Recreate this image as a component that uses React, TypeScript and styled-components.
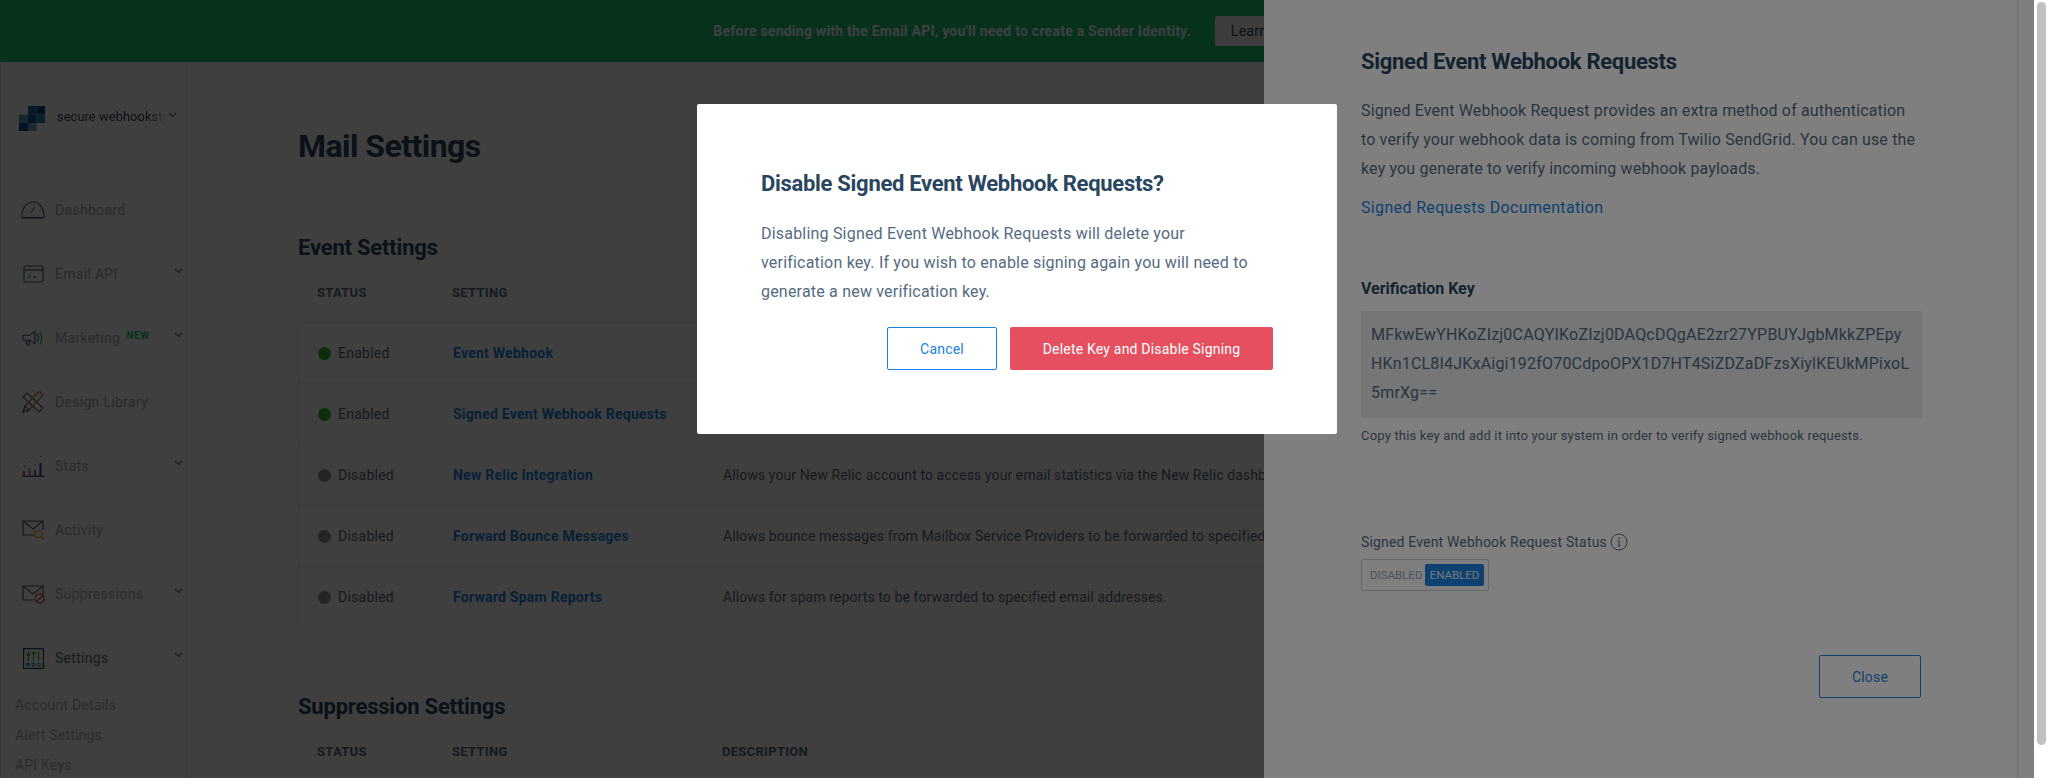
import React from 'react';
import styled, { createGlobalStyle } from 'styled-components';

const Global = createGlobalStyle`
  html, body { margin: 0; padding: 0; height: 100%; overflow: hidden; background: #fff; }
  body { font-family: Roboto, "Liberation Sans", sans-serif; color: #546b81; }
  #root { height: 100%; }
`;

const Shell = styled.div`
  display: flex;
  width: 2048px;
  height: 778px;
  overflow: hidden;
`;
const Viewport = styled.div`
  position: relative;
  width: 2034px;
  height: 778px;
  overflow: hidden;
  display: flex;
  flex-direction: column;
  background: #fff;
`;
const ScrollTrack = styled.div`
  width: 14px;
  background: #fff;
  display: flex;
  justify-content: center;
  padding-top: 2px;
`;
const ScrollThumb = styled.div`
  width: 9px;
  height: 743px;
  border-radius: 5px;
  background: #c1c1c1;
`;
const Banner = styled.div`
  height: 62px;
  flex: none;
  background: #18c96e;
  display: flex;
  align-items: center;
  justify-content: center;
  gap: 24px;
`;
const BannerText = styled.span`
  font-size: 14px;
  font-weight: 700;
  color: #fff;
  letter-spacing: 0.24px;
`;
const BannerButton = styled.span`
  height: 30px;
  width: 106px;
  display: flex;
  align-items: center;
  justify-content: center;
  background: #f4f4f4;
  border-radius: 2px;
  font-size: 14px;
  color: #294661;
  letter-spacing: 0.3px;
`;
const Body = styled.div`
  flex: 1;
  display: flex;
  min-height: 0;
`;
const Sidebar = styled.aside`
  width: 192px;
  flex: none;
  border-left: 1px solid #e6e6e6;
  border-right: 1px solid #ececec;
  box-sizing: border-box;
  overflow: hidden;
`;
const Account = styled.div`
  display: flex;
  align-items: center;
  height: 26px;
  margin: 43px 0 0 18px;
`;
const AccountName = styled.span`
  margin: -3px 0 0 12px;
  width: 111px;
  overflow: hidden;
  white-space: nowrap;
  font-size: 13px;
  color: #294661;
  -webkit-mask-image: linear-gradient(to right, #000 84%, transparent 100%);
  mask-image: linear-gradient(to right, #000 84%, transparent 100%);
`;
const AccountChevron = styled.span`
  display: flex;
  margin: -6px 0 0 0;
`;
const Nav = styled.nav`
  margin-top: 47px;
`;
const NavItem = styled.div`
  height: 64px;
  display: flex;
  align-items: center;
  padding-left: 19px;
  position: relative;
`;
const NavIcon = styled.span`
  width: 26px;
  height: 24px;
  flex: none;
  display: flex;
  align-items: center;
  justify-content: center;
  margin-right: 9px;
`;
const NavLabel = styled.span<{ $active?: boolean }>`
  font-size: 14px;
  letter-spacing: 0.3px;
  color: ${(p) => (p.$active ? '#546b81' : '#9eacba')};
`;
const NewTag = styled.span`
  font-size: 10px;
  font-weight: 700;
  letter-spacing: 0.6px;
  color: #18c96e;
  margin: -6px 0 0 6px;
`;
const NavChevron = styled.span`
  position: absolute;
  left: 173px;
  top: 26px;
  display: flex;
`;
const SubList = styled.div``;
const SubItem = styled.div`
  height: 30px;
  display: flex;
  align-items: center;
  padding-left: 14px;
  font-size: 14px;
  letter-spacing: 0.2px;
  color: #a3b0bc;
`;
const Main = styled.main`
  flex: 1;
  min-width: 0;
  padding: 64px 60px 0 106px;
  overflow: hidden;
`;
const PageTitle = styled.h1`
  margin: 0;
  font-size: 32px;
  line-height: 40px;
  font-weight: 700;
  letter-spacing: -0.55px;
  color: #294661;
`;
const SectionTitle = styled.h2<{ $top: number }>`
  margin: ${(p) => p.$top}px 0 0;
  font-size: 22px;
  line-height: 28px;
  font-weight: 700;
  letter-spacing: -0.2px;
  color: #294661;
`;
const HeadRow = styled.div`
  display: grid;
  grid-template-columns: 135px 270px 1fr;
  padding-left: 19px;
  height: 30px;
  margin: 15px 0;
  align-items: center;
  font-size: 13px;
  font-weight: 700;
  letter-spacing: 0.3px;
  color: #546b81;
`;
const Table = styled.div`
  border: 1px solid #e9ecef;
  border-right: none;
`;
const Row = styled.div`
  display: grid;
  grid-template-columns: 135px 270px 1fr;
  padding-left: 19px;
  height: 60px;
  align-items: center;
  font-size: 14px;
  white-space: nowrap;
  & + & { border-top: 1px solid #e9ecef; }
`;
const Status = styled.span`
  display: flex;
  align-items: center;
  gap: 7px;
  letter-spacing: 0.25px;
`;
const Dot = styled.span<{ $on: boolean }>`
  width: 13px;
  height: 13px;
  border-radius: 50%;
  background: ${(p) => (p.$on ? '#30b030' : '#8f9499')};
`;
const SettingLink = styled.span`
  font-weight: 700;
  color: #1a82e2;
  letter-spacing: 0.25px;
`;
const Description = styled.span`
  letter-spacing: 0.1px;
`;
const Overlay = styled.div`
  position: absolute;
  inset: 0;
  background: rgba(0, 0, 0, 0.5);
`;
const ModalLayer = styled(Overlay)`
  display: flex;
  justify-content: center;
  align-items: flex-start;
  padding-top: 104px;
  box-sizing: border-box;
`;
const Drawer = styled.section`
  position: absolute;
  top: 0;
  bottom: 0;
  left: 1264px;
  right: 0;
  background: #fff;
  box-sizing: border-box;
  padding: 47px 0 0 97px;
  &::after {
    content: '';
    position: absolute;
    top: 0;
    bottom: 0;
    right: 16px;
    width: 1px;
    background: #dfdfdf;
  }
`;
const DrawerTitle = styled.h3`
  margin: 0;
  font-size: 22px;
  line-height: 30px;
  font-weight: 700;
  letter-spacing: -0.3px;
  color: #294661;
`;
const DrawerCopy = styled.p`
  margin: 19px 0 0;
  width: 570px;
  font-size: 16px;
  line-height: 29px;
  letter-spacing: 0.15px;
  color: #546b81;
`;
const DocLink = styled.div`
  margin-top: 10px;
  font-size: 16px;
  line-height: 29px;
  letter-spacing: 0.35px;
  color: #1a82e2;
`;
const KeyLabel = styled.div`
  margin-top: 56px;
  font-size: 16px;
  line-height: 22px;
  font-weight: 700;
  color: #294661;
`;
const KeyBox = styled.div`
  margin-top: 11px;
  width: 561px;
  height: 107px;
  box-sizing: border-box;
  padding: 9px 10px;
  background: #e9ecef;
  font-size: 16px;
  line-height: 29px;
  color: #546b81;
  letter-spacing: 0.2px;
  white-space: nowrap;
`;
const KeyHint = styled.div`
  margin-top: 9px;
  font-size: 13px;
  line-height: 18px;
  letter-spacing: 0.18px;
  color: #546b81;
`;
const StatusLine = styled.div`
  margin-top: 87px;
  display: flex;
  align-items: center;
  gap: 3px;
  font-size: 14px;
  line-height: 20px;
  letter-spacing: 0.17px;
  color: #546b81;
`;
const Toggle = styled.div`
  margin-top: 7px;
  width: 128px;
  height: 32px;
  box-sizing: border-box;
  border: 1px solid #c8ced4;
  border-radius: 2px;
  display: flex;
  align-items: center;
  padding-left: 8px;
  font-size: 11.5px;
`;
const ToggleOff = styled.span`
  width: 55px;
  color: #9aa6b2;
`;
const ToggleOn = styled.span`
  width: 59px;
  height: 22px;
  border-radius: 2px;
  background: #1a82e2;
  color: #e8f1fb;
  display: flex;
  align-items: center;
  justify-content: center;
`;
const DrawerFooter = styled.div`
  margin-top: 64px;
  width: 560px;
  display: flex;
  justify-content: flex-end;
`;
const Button = styled.button<{ $kind: 'outline' | 'danger'; $w: number }>`
  width: ${(p) => p.$w}px;
  height: 43px;
  box-sizing: border-box;
  padding: 0;
  border-radius: 2px;
  font-family: Roboto, "Liberation Sans", sans-serif;
  font-size: 14px;
  letter-spacing: 0.2px;
  border: 1px solid ${(p) => (p.$kind === 'danger' ? '#e54f5f' : '#1a82e2')};
  background: ${(p) => (p.$kind === 'danger' ? '#e54f5f' : '#fff')};
  color: ${(p) => (p.$kind === 'danger' ? '#fff' : '#1a82e2')};
`;
const Modal = styled.div`
  width: 640px;
  height: 330px;
  box-sizing: border-box;
  padding: 65px 64px 0;
  background: #fff;
  border-radius: 2px;
`;
const ModalTitle = styled.h3`
  margin: 0;
  font-size: 22px;
  line-height: 30px;
  font-weight: 700;
  letter-spacing: -0.3px;
  color: #294661;
`;
const ModalCopy = styled.p`
  margin: 20px 0 0;
  font-size: 16px;
  line-height: 29px;
  letter-spacing: 0.2px;
  color: #546b81;
`;
const ModalActions = styled.div`
  margin-top: 21px;
  display: flex;
  justify-content: flex-end;
  gap: 13px;
`;

const Chevron = () => (
  <svg width="9" height="6" viewBox="0 0 9 6" fill="none" stroke="#546b81" strokeWidth="1.1">
    <path d="M1 1l3.5 3.5L8 1" />
  </svg>
);

const Logo = () => (
  <svg width="26" height="25" viewBox="0 0 26 25">
    <rect x="9" y="0" width="8.5" height="8.5" fill="#0f6aa8" />
    <rect x="17.5" y="0" width="8.5" height="8.5" fill="#0a4a86" />
    <rect x="9" y="8.5" width="8.5" height="8.5" fill="#0a4f8f" />
    <rect x="17.5" y="8.5" width="8.5" height="8.5" fill="#1d88b0" />
    <rect x="0" y="8.5" width="9" height="8.5" fill="#5fa0b5" />
    <rect x="0" y="17" width="9" height="8" fill="#0a4a9a" />
    <rect x="9" y="17" width="8.5" height="8" fill="#6fa6b8" />
  </svg>
);

const S = '#4e6478';
const icons: Record<string, React.ReactNode> = {
  dashboard: (
    <svg width="24" height="18" viewBox="0 0 24 18" fill="none" stroke={S} strokeWidth="1.2">
      <path d="M1 16.5C.6 8 5 1 12 1s11.4 7 11 15.5z" />
      <path d="M1 16.8h22" strokeWidth="1.6" />
      <path d="M9.5 12.5L14 6" stroke="#3b82e2" />
      <path d="M13 2.5v2" stroke="#f08a3c" />
    </svg>
  ),
  email: (
    <svg width="21" height="18" viewBox="0 0 21 18" fill="none" stroke={S} strokeWidth="1.2">
      <rect x="1" y="1" width="19" height="16" rx="1.5" />
      <path d="M1 5h19" />
      <path d="M5 9.5l2.5 2L5 13.5" stroke="#18c96e" />
      <path d="M10 12h3" />
    </svg>
  ),
  marketing: (
    <svg width="22" height="18" viewBox="0 0 22 18" fill="none" stroke={S} strokeWidth="1.2">
      <path d="M1 6.5h6L13 2.5v12L7 11H1z" />
      <path d="M3.5 11l1.5 5h2.5L6.5 11" />
      <path d="M15.5 4.5c1.2 2.5 1.2 5.5 0 8" stroke="#3b82e2" />
      <path d="M18 2c2 4 2 9 0 13.5" stroke="#18c96e" />
    </svg>
  ),
  design: (
    <svg width="22" height="22" viewBox="0 0 22 22" fill="none" stroke={S} strokeWidth="1.2">
      <path d="M1 6l4-4 16 15-4 4z" />
      <path d="M1 21l2-6L16 1.5c1-.7 2.5-.5 3.5.5s1.2 2.3.5 3.3L7 19z" stroke="#d9603e" />
      <path d="M1 21l2-6 4 4z" />
    </svg>
  ),
  stats: (
    <svg width="22" height="22" viewBox="0 0 22 22" fill="none" strokeWidth="1.4">
      <path d="M0 21.2h22" stroke={S} />
      <path d="M2 21v-5" stroke="#d9436a" strokeWidth="2" />
      <path d="M7.5 21v-8" stroke="#c46ab0" strokeWidth="2" />
      <path d="M13 21v-6" stroke="#7a5ad0" strokeWidth="2" />
      <path d="M18.5 21V8" stroke="#4a3ab0" strokeWidth="2" />
      <path d="M3 11v1M7.5 6v1M13 9v1M18.5 1v1" stroke={S} />
    </svg>
  ),
  activity: (
    <svg width="23" height="20" viewBox="0 0 23 20" fill="none" stroke={S} strokeWidth="1.2">
      <path d="M12 15H1V1h20v9" />
      <path d="M1 1l10 8 10-8" />
      <circle cx="16.5" cy="14" r="3.5" stroke="#f0a030" />
      <path d="M19 16.5l3 3" stroke="#f0a030" />
    </svg>
  ),
  suppressions: (
    <svg width="23" height="19" viewBox="0 0 23 19" fill="none" stroke={S} strokeWidth="1.2">
      <path d="M12 15H1V1h20v9" />
      <path d="M1 1l10 8 10-8" />
      <circle cx="17.5" cy="13.5" r="4.5" stroke="#e54f3c" strokeWidth="1.4" />
      <path d="M14.5 16.5l6-6" stroke="#e54f3c" strokeWidth="1.4" />
    </svg>
  ),
  settings: (
    <svg width="21" height="21" viewBox="0 0 21 21" fill="none" stroke="#294661" strokeWidth="1.2">
      <rect x=".6" y=".6" width="19.8" height="19.8" />
      <path d="M5.5 3v10M10.5 3v10M15.5 3v10" stroke="#3a9a4a" />
      <path d="M3.5 7h4M8.5 5h4" stroke="#18a050" strokeWidth="1.4" />
      <path d="M13.5 9.5h4" stroke="#a0b030" strokeWidth="1.4" />
      <circle cx="5" cy="16.5" r="1.5" stroke="#3a60d0" />
      <circle cx="10.5" cy="16.5" r="1.5" stroke="#3a90d0" />
      <circle cx="16" cy="16.5" r="1.5" stroke="#30b0a0" />
    </svg>
  ),
};

const navItems = [
  { key: 'dashboard', label: 'Dashboard' },
  { key: 'email', label: 'Email API', chevron: true },
  { key: 'marketing', label: 'Marketing', chevron: true, tag: 'NEW' },
  { key: 'design', label: 'Design Library' },
  { key: 'stats', label: 'Stats', chevron: true },
  { key: 'activity', label: 'Activity' },
  { key: 'suppressions', label: 'Suppressions', chevron: true },
  { key: 'settings', label: 'Settings', chevron: true, active: true },
];

const eventRows = [
  { on: true, name: 'Event Webhook', desc: '' },
  { on: true, name: 'Signed Event Webhook Requests', desc: '' },
  { on: false, name: 'New Relic Integration', desc: 'Allows your New Relic account to access your email statistics via the New Relic dashboard.' },
  { on: false, name: 'Forward Bounce Messages', desc: 'Allows bounce messages from Mailbox Service Providers to be forwarded to specified email addresses.' },
  { on: false, name: 'Forward Spam Reports', desc: 'Allows for spam reports to be forwarded to specified email addresses.' },
];

export default function App() {
  return (
    <Shell>
      <Global />
      <Viewport>
        <Banner>
          <BannerText>Before sending with the Email API, you'll need to create a Sender Identity.</BannerText>
          <BannerButton>Learn More</BannerButton>
        </Banner>
        <Body>
          <Sidebar>
            <Account>
              <Logo />
              <AccountName>secure webhookstest</AccountName>
              <AccountChevron><Chevron /></AccountChevron>
            </Account>
            <Nav>
              {navItems.map((n) => (
                <NavItem key={n.key}>
                  <NavIcon>{icons[n.key]}</NavIcon>
                  <NavLabel $active={n.active}>{n.label}</NavLabel>
                  {n.tag && <NewTag>{n.tag}</NewTag>}
                  {n.chevron && <NavChevron><Chevron /></NavChevron>}
                </NavItem>
              ))}
            </Nav>
            <SubList>
              <SubItem>Account Details</SubItem>
              <SubItem>Alert Settings</SubItem>
              <SubItem>API Keys</SubItem>
            </SubList>
          </Sidebar>
          <Main>
            <PageTitle>Mail Settings</PageTitle>
            <SectionTitle $top={68}>Event Settings</SectionTitle>
            <HeadRow>
              <span>STATUS</span>
              <span>SETTING</span>
            </HeadRow>
            <Table>
              {eventRows.map((r) => (
                <Row key={r.name}>
                  <Status><Dot $on={r.on} />{r.on ? 'Enabled' : 'Disabled'}</Status>
                  <SettingLink>{r.name}</SettingLink>
                  <Description>{r.desc}</Description>
                </Row>
              ))}
            </Table>
            <SectionTitle $top={65}>Suppression Settings</SectionTitle>
            <HeadRow>
              <span>STATUS</span>
              <span>SETTING</span>
              <span>DESCRIPTION</span>
            </HeadRow>
          </Main>
        </Body>
        <Overlay />
        <Drawer>
          <DrawerTitle>Signed Event Webhook Requests</DrawerTitle>
          <DrawerCopy>
            Signed Event Webhook Request provides an extra method of authentication<br />
            to verify your webhook data is coming from Twilio SendGrid. You can use the<br />
            key you generate to verify incoming webhook payloads.
          </DrawerCopy>
          <DocLink>Signed Requests Documentation</DocLink>
          <KeyLabel>Verification Key</KeyLabel>
          <KeyBox>
            MFkwEwYHKoZIzj0CAQYIKoZIzj0DAQcDQgAE2zr27YPBUYJgbMkkZPEpy<br />
            HKn1CL8I4JKxAigi192fO70CdpoOPX1D7HT4SiZDZaDFzsXiylKEUkMPixoL<br />
            5mrXg==
          </KeyBox>
          <KeyHint>Copy this key and add it into your system in order to verify signed webhook requests.</KeyHint>
          <StatusLine>
            Signed Event Webhook Request Status
            <svg width="18" height="18" viewBox="0 0 18 18" fill="none" stroke="#546b81" strokeWidth="1">
              <circle cx="9" cy="9" r="8" />
              <path d="M7.5 8h1.7v5M7.5 13h3.2" />
              <circle cx="9" cy="5.3" r=".5" />
            </svg>
          </StatusLine>
          <Toggle>
            <ToggleOff>DISABLED</ToggleOff>
            <ToggleOn>ENABLED</ToggleOn>
          </Toggle>
          <DrawerFooter>
            <Button $kind="outline" $w={102}>Close</Button>
          </DrawerFooter>
        </Drawer>
        <ModalLayer>
          <Modal>
            <ModalTitle>Disable Signed Event Webhook Requests?</ModalTitle>
            <ModalCopy>
              Disabling Signed Event Webhook Requests will delete your<br />
              verification key. If you wish to enable signing again you will need to<br />
              generate a new verification key.
            </ModalCopy>
            <ModalActions>
              <Button $kind="outline" $w={110}>Cancel</Button>
              <Button $kind="danger" $w={263}>Delete Key and Disable Signing</Button>
            </ModalActions>
          </Modal>
        </ModalLayer>
      </Viewport>
      <ScrollTrack><ScrollThumb /></ScrollTrack>
    </Shell>
  );
}
